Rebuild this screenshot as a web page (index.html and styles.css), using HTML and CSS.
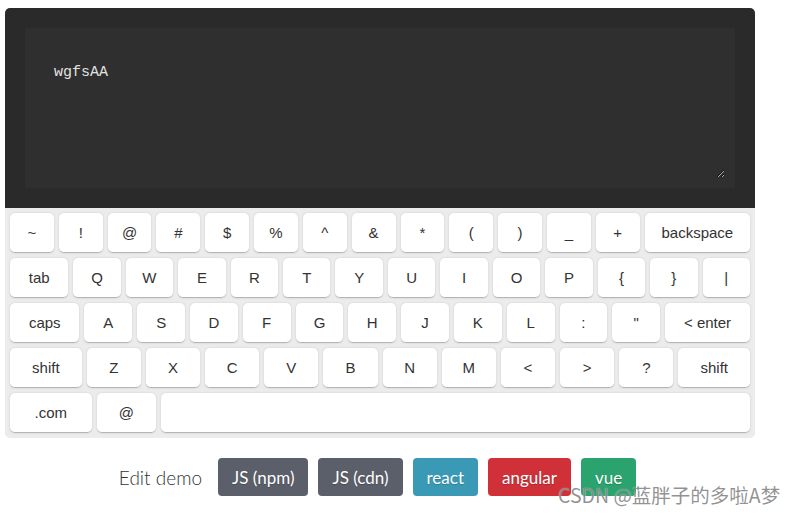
FILE: index.html
```html
<!DOCTYPE html>
<html lang="en">
<head>
    <meta charset="UTF-8">
    <meta name="viewport" content="width=device-width, initial-scale=1.0">
    <title>simple-keyboard demo</title>
    <link rel="stylesheet" href="styles.css">
</head>
<body>
    <div class="demo">
        <div class="screen">
            <textarea class="input" spellcheck="false">wgfsAA</textarea>
        </div>

        <div class="keyboard">
            <div class="row">
                <div class="key">~</div>
                <div class="key">!</div>
                <div class="key">@</div>
                <div class="key">#</div>
                <div class="key">$</div>
                <div class="key">%</div>
                <div class="key">^</div>
                <div class="key">&amp;</div>
                <div class="key">*</div>
                <div class="key">(</div>
                <div class="key">)</div>
                <div class="key">_</div>
                <div class="key">+</div>
                <div class="key key-fn">backspace</div>
            </div>
            <div class="row">
                <div class="key key-fn">tab</div>
                <div class="key">Q</div>
                <div class="key">W</div>
                <div class="key">E</div>
                <div class="key">R</div>
                <div class="key">T</div>
                <div class="key">Y</div>
                <div class="key">U</div>
                <div class="key">I</div>
                <div class="key">O</div>
                <div class="key">P</div>
                <div class="key">{</div>
                <div class="key">}</div>
                <div class="key">|</div>
            </div>
            <div class="row">
                <div class="key key-fn">caps</div>
                <div class="key">A</div>
                <div class="key">S</div>
                <div class="key">D</div>
                <div class="key">F</div>
                <div class="key">G</div>
                <div class="key">H</div>
                <div class="key">J</div>
                <div class="key">K</div>
                <div class="key">L</div>
                <div class="key">:</div>
                <div class="key">"</div>
                <div class="key key-fn">&lt; enter</div>
            </div>
            <div class="row">
                <div class="key key-fn">shift</div>
                <div class="key">Z</div>
                <div class="key">X</div>
                <div class="key">C</div>
                <div class="key">V</div>
                <div class="key">B</div>
                <div class="key">N</div>
                <div class="key">M</div>
                <div class="key">&lt;</div>
                <div class="key">&gt;</div>
                <div class="key">?</div>
                <div class="key key-fn">shift</div>
            </div>
            <div class="row">
                <div class="key key-fn">.com</div>
                <div class="key">@</div>
                <div class="key key-space">&nbsp;</div>
            </div>
        </div>

        <div class="edit-demo">
            <span class="edit-label">Edit demo</span>
            <a class="btn btn-js" href="#">JS (npm)</a>
            <a class="btn btn-js" href="#">JS (cdn)</a>
            <a class="btn btn-react" href="#">react</a>
            <a class="btn btn-angular" href="#">angular</a>
            <a class="btn btn-vue" href="#">vue</a>
        </div>
    </div>

    <div class="watermark">CSDN @蓝胖子的多啦A梦</div>
</body>
</html>
```

FILE: styles.css
```css
body {
    margin: 0;
    background: #fff;
    font-family: 'Liberation Sans', Arial, sans-serif;
}
.demo {
    width: 750px;
    margin: 8px 0 0 5px;
}
.screen {
    background: #2a2a2a;
    padding: 20px;
    border-radius: 5px 5px 0 0;
}
.input {
    display: block;
    width: 100%;
    height: 160px;
    box-sizing: border-box;
    margin: 0;
    padding: 25px 19px;
    border: 10px solid #2f2f2f;
    outline: none;
    background: #2f2f2f;
    color: #e2e2e2;
    font-family: 'Liberation Mono', 'Courier New', monospace;
    font-size: 15px;
    line-height: 20px;
    resize: vertical;
}
.keyboard {
    background: #ececec;
    padding: 5px;
    border-radius: 0 0 5px 5px;
    font-size: 15px;
    color: #333;
}
.row {
    display: flex;
}
.row:not(:last-child) {
    margin-bottom: 5px;
}
.key {
    flex-grow: 1;
    width: 20px;
    height: 40px;
    box-sizing: border-box;
    padding: 5px;
    display: flex;
    align-items: center;
    justify-content: center;
    background: #fff;
    border-radius: 5px;
    border-bottom: 1px solid #b5b5b5;
    box-shadow: 0 0 3px -1px rgba(0, 0, 0, 0.3);
    white-space: nowrap;
    cursor: pointer;
}
.key:not(:last-child) {
    margin-right: 5px;
}
.key-fn {
    width: auto;
}
.key-space {
    width: 550px;
}
.edit-demo {
    display: flex;
    align-items: center;
    justify-content: center;
    gap: 10px;
    margin-top: 20px;
    padding-right: 5px;
    font-family: Lato, 'Open Sans', sans-serif;
}
.edit-label {
    font-size: 19px;
    font-weight: 300;
    color: #333;
    margin-right: 6px;
}
.btn {
    display: inline-flex;
    align-items: center;
    height: 38px;
    padding: 0 14px;
    border-radius: 4px;
    color: #fff;
    font-size: 17px;
    text-decoration: none;
    text-shadow: 0 1px 1px rgba(0, 0, 0, 0.2);
}
.btn-js {
    background: #5b5f6a;
}
.btn-react {
    background: #3a9ab5;
}
.btn-angular {
    background: #d03037;
}
.btn-vue {
    background: #2aa36e;
}
.watermark {
    position: absolute;
    left: 558px;
    top: 480px;
    font-family: 'Noto Sans CJK SC', sans-serif;
    font-size: 19.5px;
    color: rgba(110, 110, 110, 0.75);
    text-shadow: 0 0 1px rgba(255, 255, 255, 0.8);
    white-space: nowrap;
}
```
